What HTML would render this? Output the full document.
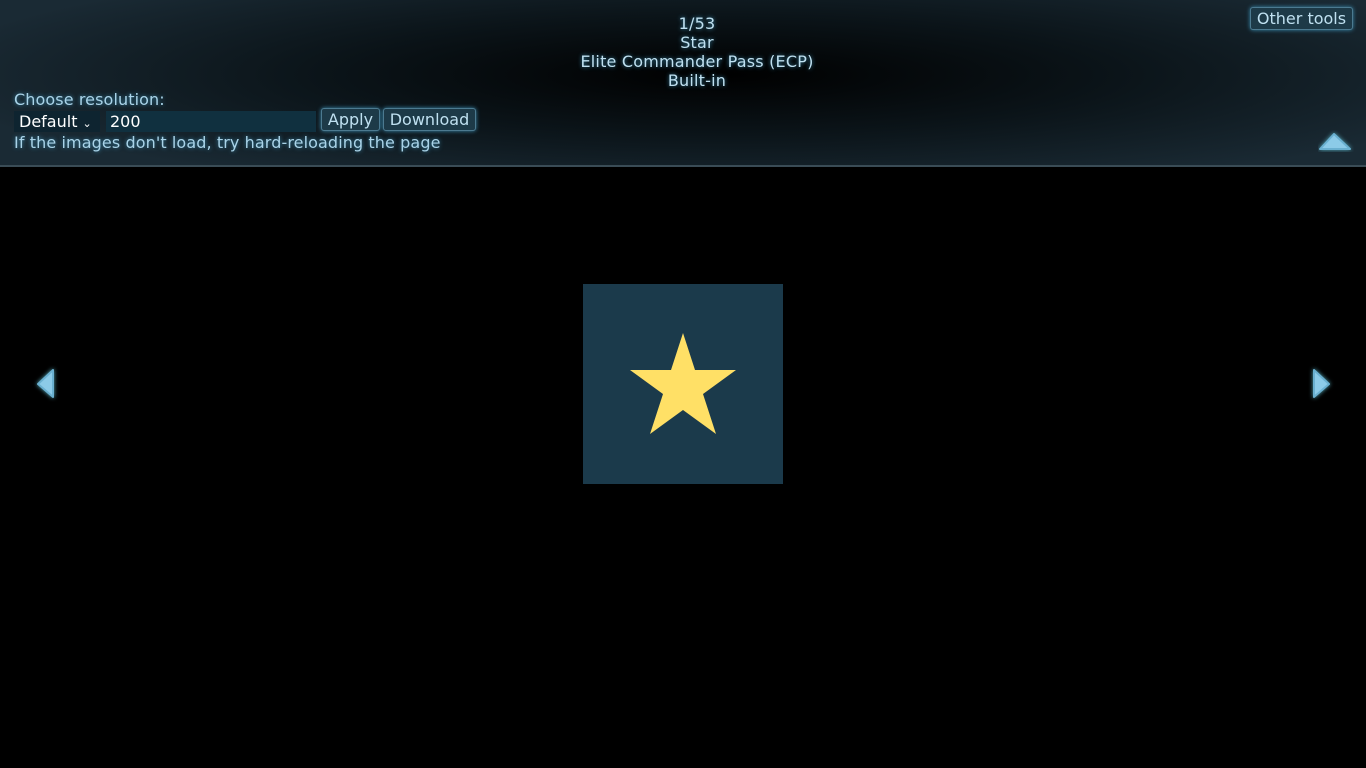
<!DOCTYPE html>
<html><head><style>
html,body{margin:0;padding:0;background:#000;width:1366px;height:768px;overflow:hidden;font-family:"DejaVu Sans","Liberation Sans",sans-serif;color:#a9d3e8;font-size:16px}
#hdr{position:absolute;left:0;top:0;width:1366px;height:165px;background:radial-gradient(ellipse 800px 120px at 720px 75px,#000 0%,#0b1419 50%,#1a2a34 100%);border-bottom:2px solid #3a4c56}
.c{position:absolute;left:14px;width:1366px;text-align:center;top:14px;line-height:19px;font-size:16px;color:#bfe0f0;text-shadow:0 0 4px #3a8cb0;letter-spacing:0.2px}
.t{position:absolute;text-shadow:0 0 4px #3a8cb0;color:#a9d3e8;white-space:nowrap;letter-spacing:0.1px}
.btn{position:absolute;border:1px solid #4c7a90;border-radius:3px;background:#1d3a48;color:#bfe0f0;box-shadow:0 0 4px #3a8cb0;font-size:16px;line-height:21px;padding:0;box-sizing:border-box;height:23px;white-space:nowrap;text-align:center}
</style></head><body>
<div id="hdr">
<div class="c">1/53<br>Star<br>Elite Commander Pass (ECP)<br>Built-in</div>
<div class="t" style="left:14px;top:90px">Choose resolution:</div>
<div style="position:absolute;left:14px;top:111px;width:86px;height:21px;background:#0e2430;color:#fff;line-height:21px;padding-left:5px;box-sizing:border-box">Default <span style="font-size:11px">&#8964;</span></div>
<div style="position:absolute;left:106px;top:111px;width:210px;height:21px;background:#10303f;color:#fff;line-height:21px;padding-left:4px;box-sizing:border-box">200</div>
<div class="btn" style="left:321px;top:108px;width:59px">Apply</div>
<div class="btn" style="left:383px;top:108px;width:93px">Download</div>
<div class="t" style="left:14px;top:133px">If the images don't load, try hard-reloading the page</div>
<div class="btn" style="left:1250px;top:7px;width:103px">Other tools</div>
<svg style="position:absolute;left:1318px;top:130px" width="36" height="22"><path d="M2 19 L16 4 L32 19 Z" fill="#8ccbe8" stroke="#6ab0d0" stroke-width="2" stroke-linejoin="round" style="filter:drop-shadow(0 0 2px #5ab)"/></svg>
</div>
<svg style="position:absolute;left:30px;top:365px" width="30" height="38"><path d="M23 5 L23 32 L8 19 Z" fill="#8ccbe8" stroke="#6ab0d0" stroke-width="2" stroke-linejoin="round" style="filter:drop-shadow(0 0 2px #5ab)"/></svg>
<svg style="position:absolute;left:1306px;top:365px" width="30" height="38"><path d="M8 5 L8 32 L23 19 Z" fill="#8ccbe8" stroke="#6ab0d0" stroke-width="2" stroke-linejoin="round" style="filter:drop-shadow(0 0 2px #5ab)"/></svg>
<svg style="position:absolute;left:583px;top:284px" width="200" height="200"><rect width="200" height="200" fill="#1b3a4b"/><path d="M100 49 L112 86 L153 86 L120 110 L133 150 L100 126 L67 150 L80 110 L47 86 L88 86 Z" fill="#ffe066"/></svg>
</body></html>
